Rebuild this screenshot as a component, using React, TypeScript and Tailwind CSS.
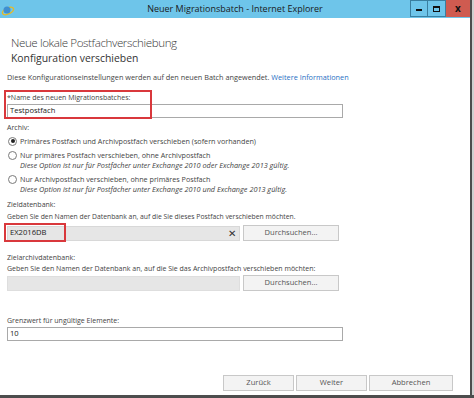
import React from "react";

const F = { fontFamily: '"Open Sans", "Noto Sans", sans-serif' };

function Radio({ checked }: { checked?: boolean }) {
  return (
    <span className="relative inline-block w-[9px] h-[9px] rounded-full border border-[#7a7a7a] bg-white shrink-0">
      {checked && <span className="absolute left-[1.5px] top-[1.5px] w-[4px] h-[4px] rounded-full bg-[#222]" />}
    </span>
  );
}

function Btn({ label, w }: { label: string; w: string }) {
  return (
    <div className={`${w} h-[16px] border border-[#c8c8c8] bg-[#f3f3f3] flex items-center justify-center text-[7.6px] text-[#555]`}>
      {label}
    </div>
  );
}

export default function App() {
  return (
    <div style={F} className="w-[474px] h-[398px] bg-white overflow-hidden flex flex-col">
      <div className="flex flex-row flex-1 min-h-0">
        <div className="flex-1 flex flex-col min-w-0">
          {/* Title bar */}
          <div className="h-[18px] bg-[#6ec5ea] flex items-center relative shrink-0">
            <svg width="14" height="12" viewBox="0 0 14 12" className="ml-[1px] mt-[1px]">
              <ellipse cx="7" cy="7" rx="6" ry="3" fill="none" stroke="#e8b923" strokeWidth="1.4" transform="rotate(-25 7 7)" />
              <circle cx="6" cy="6" r="3.5" fill="#3f8fd0" />
            </svg>
            <div className="absolute left-0 right-0 top-0 h-[18px] flex items-center justify-center text-[9px] text-[#1a1a1a] pointer-events-none">
              Neuer Migrationsbatch - Internet Explorer
            </div>
            <div className="ml-auto flex items-start h-[18px]">
              <div className="w-[18px] h-[17px] border border-[#3a7fa0] flex items-center justify-center">
                <span className="block w-[6px] h-[2px] bg-[#111] mt-[3px]" />
              </div>
              <div className="w-[18px] h-[17px] border border-l-0 border-[#3a7fa0] flex items-center justify-center">
                <span className="block w-[7px] h-[6px] border-[1.5px] border-t-[2.5px] border-[#111]" />
              </div>
              <div className="w-[24px] h-[17px] bg-[#cf5b50] flex items-center justify-center text-[10px] font-bold text-[#111]">
                x
              </div>
            </div>
          </div>

          {/* Content */}
          <div className="flex flex-col text-[#444] relative">
            <div className="ml-[11px] mt-[17px] text-[11.6px] leading-[16px] tracking-[-0.4px] font-light text-[#3a3a3a]">Neue lokale Postfachverschiebung</div>
            <div className="ml-[11px] mt-[1px] text-[10.4px] leading-[12px] text-[#333]">Konfiguration verschieben</div>
            <div className="ml-[7px] mt-[8px] text-[7.3px] leading-[10px] text-[#444] whitespace-nowrap">
              Diese Konfigurationseinstellungen werden auf den neuen Batch angewendet.{" "}
              <span className="text-[#1f6fc4]">Weitere Informationen</span>
            </div>

            {/* Name */}
            <div className="relative mt-[9px] ml-[7px]">
              <div className="text-[7px] leading-[10px] mt-[2px]">*Name des neuen Migrationsbatches:</div>
              <div className="w-[336px] h-[14px] border border-[#a9a9a9] bg-white mt-[1px] flex items-center pl-[2px] text-[7.6px] text-[#222]">
                Testpostfach
              </div>
              <div className="absolute left-[-3px] top-[-1px] w-[148px] h-[29px] border-2 border-[#d9383c]" />
            </div>

            <div className="ml-[7px] mt-[5px] text-[7px] leading-[10px]">Archiv:</div>
            <div className="ml-[8px] mt-[3px] flex items-center gap-[3px] text-[7.2px] leading-[10px]">
              <Radio checked /> <span>Primäres Postfach und Archivpostfach verschieben (sofern vorhanden)</span>
            </div>
            <div className="ml-[8px] mt-[4px] flex items-center gap-[3px] text-[7.2px] leading-[10px]">
              <Radio /> <span>Nur primäres Postfach verschieben, ohne Archivpostfach</span>
            </div>
            <div className="ml-[20px] text-[7.3px] leading-[10px] italic">
              Diese Option ist nur für Postfächer unter Exchange 2010 oder Exchange 2013 gültig.
            </div>
            <div className="ml-[8px] mt-[4px] flex items-center gap-[3px] text-[7.2px] leading-[10px]">
              <Radio /> <span>Nur Archivpostfach verschieben, ohne primäres Postfach</span>
            </div>
            <div className="ml-[20px] text-[7.3px] leading-[10px] italic">
              Diese Option ist nur für Postfächer unter Exchange 2010 und Exchange 2013 gültig.
            </div>

            {/* Zieldatenbank */}
            <div className="ml-[7px] mt-[6px] text-[7px] leading-[10px]">Zieldatenbank:</div>
            <div className="ml-[7px] mt-[2px] text-[6.8px] leading-[10px]">
              Geben Sie den Namen der Datenbank an, auf die Sie dieses Postfach verschieben möchten.
            </div>
            <div className="relative ml-[7px] mt-[3px] flex items-center gap-[3px]">
              <div className="w-[233px] h-[15px] bg-[#e6e6e6] border border-[#d8d8d8] flex items-center pl-[2px] text-[7.6px] text-[#222]">
                <span className="flex-1">EX2016DB</span>
                <span className="text-[10px] text-[#333] mr-[3px] leading-none">✕</span>
              </div>
              <Btn label="Durchsuchen..." w="w-[96px]" />
              <div className="absolute left-[-3px] top-[-2px] w-[62px] h-[19px] border-2 border-[#d9383c]" />
            </div>

            {/* Zielarchivdatenbank */}
            <div className="ml-[7px] mt-[12px] text-[7px] leading-[10px]">Zielarchivdatenbank:</div>
            <div className="ml-[7px] mt-[1px] text-[7px] leading-[10px]">
              Geben Sie den Namen der Datenbank an, auf die Sie das Archivpostfach verschieben möchten:
            </div>
            <div className="ml-[7px] mt-[1px] flex items-center gap-[3px]">
              <div className="w-[233px] h-[15px] bg-[#e6e6e6] border border-[#dedede]" />
              <Btn label="Durchsuchen..." w="w-[96px]" />
            </div>

            {/* Grenzwert */}
            <div className="ml-[7px] mt-[25px] text-[7px] leading-[10px]">Grenzwert für ungültige Elemente:</div>
            <div className="ml-[7px] mt-[1px] w-[336px] h-[14px] border border-[#a9a9a9] bg-white flex items-center pl-[2px] text-[7.6px] text-[#222]">
              10
            </div>

            {/* Footer buttons */}
            <div className="mt-[34px] flex justify-end gap-[2px] mr-[17px]">
              <Btn label="Zurück" w="w-[71px]" />
              <Btn label="Weiter" w="w-[71px]" />
              <Btn label="Abbrechen" w="w-[84px]" />
            </div>
          </div>
        </div>
        <div className="w-[2px] bg-[#4d4d4d] shrink-0" />
        <div className="w-[2px] bg-[#d0d0d0] shrink-0" />
      </div>
      <div className="h-[3px] bg-[#4d4d4d] shrink-0" />
    </div>
  );
}
